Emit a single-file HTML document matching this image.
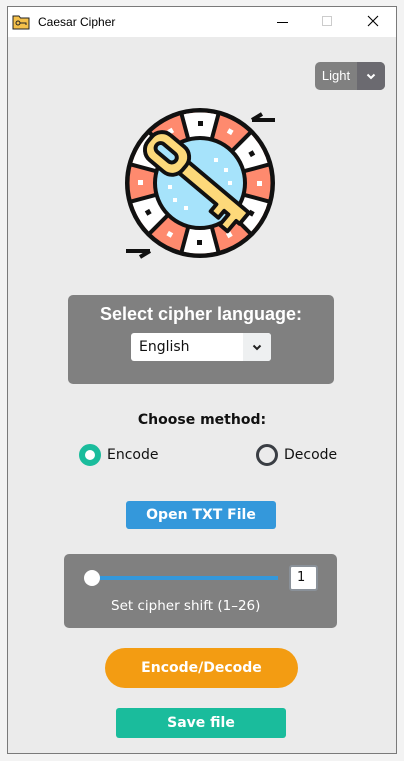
<!DOCTYPE html>
<html><head><meta charset="utf-8"><style>
*{margin:0;padding:0;box-sizing:border-box}
body{width:404px;height:761px;background:#f3f3f3;position:relative;overflow:hidden;font-family:"DejaVu Sans","Liberation Sans",sans-serif}
.win{position:absolute;left:7px;top:6px;width:390px;height:748px;border:1px solid #7a7a7a;background:#ebebeb}
.tb{position:absolute;left:0;top:0;width:388px;height:30px;background:#fff}
.abs{position:absolute}
.t{font-size:12px;color:#000;font-family:"Liberation Sans",sans-serif}
.box{position:absolute;background:#808080;border-radius:5px}
.btn{position:absolute;color:#fff;font-weight:bold;text-align:center;font-size:14px}
</style></head><body>
<div class="win">
 <div class="tb">
  <svg class="abs" style="left:4px;top:7px" width="18" height="16" viewBox="0 0 18 16"><path d="M1 2h6l1.5 2H17v11H1z" fill="#f4c04a" stroke="#222" stroke-width="1"/><circle cx="6" cy="9" r="2" fill="none" stroke="#222"/><path d="M8 9h6v2" fill="none" stroke="#222"/></svg>
  <div class="abs t" style="left:30px;top:8px">Caesar Cipher</div>
  <div class="abs" style="left:269px;top:15px;width:11px;height:1px;background:#000"></div>
  <div class="abs" style="left:314px;top:9px;width:10px;height:10px;border:1px solid #ccc"></div>
  <svg class="abs" style="left:359px;top:8px" width="12" height="12"><path d="M1 1L11 11M11 1L1 11" stroke="#000" stroke-width="1.1"/></svg>
 </div>
</div>
<div class="abs" style="left:315px;top:62px;width:70px;height:28px;border-radius:5px;background:#808080;overflow:hidden">
 <div class="abs" style="left:0;top:0;width:42px;height:28px;color:#fff;font-size:13px;line-height:28px;text-align:center;font-family:'Liberation Sans',sans-serif">Light</div>
 <div class="abs" style="left:42px;top:0;width:28px;height:28px;background:#6b6a70"></div>
 <svg class="abs" style="left:51px;top:11px" width="10" height="7"><path d="M1.5 1.5L5 5 8.5 1.5" stroke="#fff" stroke-width="2" fill="none"/></svg>
</div>
<svg class="abs" style="left:110px;top:100px" width="180" height="165" viewBox="110 100 180 165">
 <circle cx="200" cy="183" r="72" fill="#fff" stroke="#111" stroke-width="6"/>
 <circle cx="200" cy="183" r="58" fill="none" stroke="#fe8a6e" stroke-width="25"/>
 <circle cx="200" cy="183" r="58" fill="none" stroke="#fff" stroke-width="25" stroke-dasharray="30.37 30.37" stroke-dashoffset="-15.18"/>
 <g stroke="#111" stroke-width="4">
  <g id="l"><line x1="245" y1="183" x2="272" y2="183" transform="rotate(15 200 183)"/></g>
  <use href="#l" transform="rotate(30 200 183)"/><use href="#l" transform="rotate(60 200 183)"/><use href="#l" transform="rotate(90 200 183)"/><use href="#l" transform="rotate(120 200 183)"/><use href="#l" transform="rotate(150 200 183)"/><use href="#l" transform="rotate(180 200 183)"/><use href="#l" transform="rotate(210 200 183)"/><use href="#l" transform="rotate(240 200 183)"/><use href="#l" transform="rotate(270 200 183)"/><use href="#l" transform="rotate(300 200 183)"/><use href="#l" transform="rotate(330 200 183)"/>
 </g>
 <g>
  <rect id="sq" x="198" y="121" width="5" height="5" fill="#111"/>
  <use href="#sq" transform="rotate(60 200 183)"/><use href="#sq" transform="rotate(120 200 183)"/><use href="#sq" transform="rotate(180 200 183)"/><use href="#sq" transform="rotate(240 200 183)"/><use href="#sq" transform="rotate(300 200 183)"/>
  <rect id="ws" x="198" y="121" width="5" height="5" fill="#fff" transform="rotate(30 200 183)"/>
  <use href="#ws" transform="rotate(60 200 183)"/><use href="#ws" transform="rotate(120 200 183)"/><use href="#ws" transform="rotate(180 200 183)"/><use href="#ws" transform="rotate(240 200 183)"/><use href="#ws" transform="rotate(300 200 183)"/>
 </g>
 <circle cx="200" cy="183" r="45" fill="#a6e3fb" stroke="#111" stroke-width="4"/>
 <g fill="#fff"><rect x="214" y="158" width="4" height="4"/><rect x="224" y="168" width="4" height="4"/><rect x="228" y="181" width="4" height="4"/><rect x="168" y="185" width="4" height="4"/><rect x="173" y="198" width="4" height="4"/><rect x="184" y="206" width="4" height="4"/></g>
 <g transform="translate(202 185) rotate(40) scale(1.12)" stroke="#111" stroke-width="3.5" stroke-linejoin="round" fill="#fdd97a">
  <path d="M-25 -8H48V5H44V17H35V5H30V13H21V5H-25Z"/>
  <rect x="-62" y="-16" width="40" height="29" rx="12"/>
  <rect x="-54" y="-6" width="22" height="9" rx="4.5" fill="#a6e3fb"/>
 </g>
 <path d="M252 120H275M252 120L262 114" stroke="#111" stroke-width="4" fill="none"/>
 <path d="M126 251H150M150 251L140 257" stroke="#111" stroke-width="4" fill="none"/>
</svg>
<div class="box" style="left:68px;top:295px;width:266px;height:89px">
 <div class="abs" style="left:0;width:266px;top:9px;text-align:center;color:#fff;font:bold 18px 'Liberation Sans',sans-serif">Select cipher language:</div>
 <div class="abs" style="left:63px;top:38px;width:140px;height:28px;background:#fff;border-radius:3px;overflow:hidden">
  <div class="abs" style="left:8px;top:6px;font-size:14px;color:#111">English</div>
  <div class="abs" style="left:112px;top:0;width:28px;height:28px;background:#eef0f1"></div>
  <svg class="abs" style="left:121px;top:11px" width="10" height="7"><path d="M1.5 1.5L5 5 8.5 1.5" stroke="#222" stroke-width="2" fill="none"/></svg>
 </div>
</div>
<div class="abs" style="left:0;width:404px;top:412px;text-align:center;font-weight:bold;font-size:14px;color:#111">Choose method:</div>
<div class="abs" style="left:79px;top:444px;width:22px;height:22px;border-radius:50%;border:6px solid #1abc9c;background:#fff"></div>
<div class="abs" style="left:107px;top:447px;font-size:14px;color:#111">Encode</div>
<div class="abs" style="left:256px;top:444px;width:22px;height:22px;border-radius:50%;border:3px solid #3a3e44"></div>
<div class="abs" style="left:284px;top:447px;font-size:14px;color:#111">Decode</div>
<div class="btn" style="left:126px;top:501px;width:150px;height:28px;background:#3498db;border-radius:3px;line-height:28px">Open TXT File</div>
<div class="box" style="left:64px;top:554px;width:273px;height:74px">
 <div class="abs" style="left:28px;top:22px;width:186px;height:4px;background:#3498db"></div>
 <div class="abs" style="left:20px;top:16px;width:16px;height:16px;border-radius:50%;background:#fff"></div>
 <div class="abs" style="left:225px;top:11px;width:29px;height:26px;background:#fff;border:2px solid #8a9199;border-radius:3px;font-size:13px;padding:3px 0 0 6px;color:#111">1</div>
 <div class="abs" style="left:47px;top:44px;color:#fff;font-size:13.5px;white-space:nowrap">Set cipher shift (1–26)</div>
</div>
<div class="btn" style="left:105px;top:648px;width:193px;height:40px;background:#f39c12;border-radius:20px;line-height:40px;font-size:14px">Encode/Decode</div>
<div class="btn" style="left:116px;top:708px;width:170px;height:30px;background:#1abc9c;border-radius:3px;line-height:30px">Save file</div>
</body></html>
